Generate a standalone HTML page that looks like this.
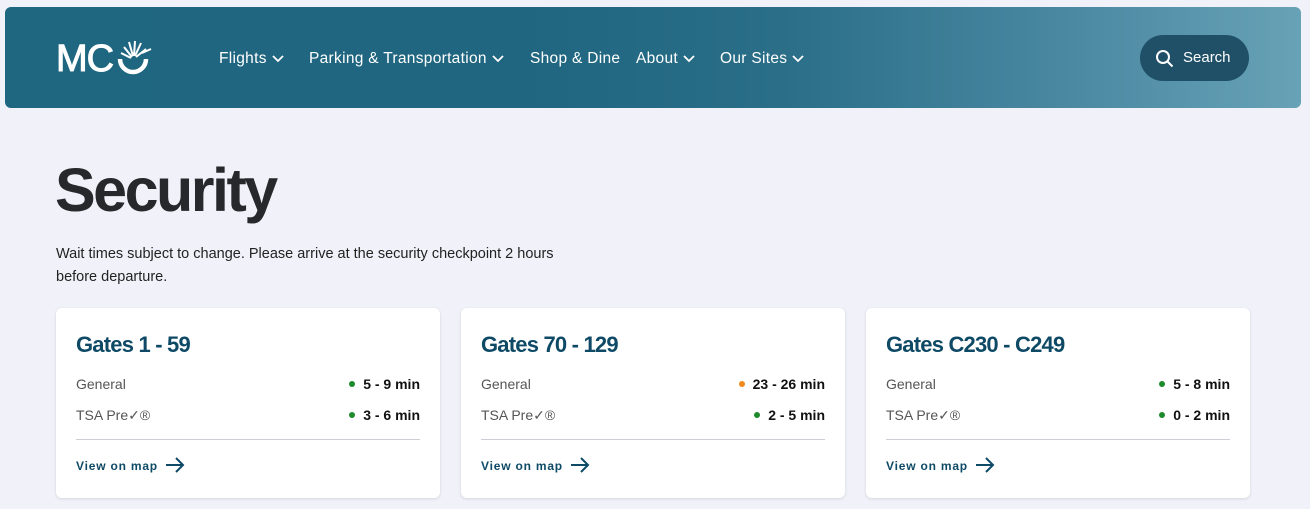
<!DOCTYPE html>
<html><head><style>
body{margin:0;width:1310px;height:509px;background:#f1f2f9;font-family:"Liberation Sans",sans-serif;overflow:hidden;position:relative}
.hdr{position:absolute;left:5px;top:7px;width:1296px;height:101px;border-radius:6px;background:linear-gradient(90deg,#1f6680 0%,#206680 40%,#2a6e88 60%,#4f8ca5 85%,#67a2b6 100%)}
.nav{position:absolute;top:50px;color:#fff;font-size:15.5px;letter-spacing:.3px}
.nav svg{vertical-align:middle;margin-left:5px}
.search{position:absolute;left:1140px;top:35px;width:109px;height:46px;border-radius:23px;background:#1f5068;color:#fff;font-size:15px}
h1{position:absolute;left:55px;top:155px;margin:0;font-size:61px;font-weight:bold;color:#27282c;letter-spacing:-2.5px}
.sub{position:absolute;left:56px;top:243px;font-size:14.5px;line-height:22.5px;color:#222;width:520px}
.card{position:absolute;top:308px;width:384px;height:190px;background:#fff;border-radius:6px;box-shadow:0 1px 3px rgba(0,0,0,.12)}
.card h2{position:absolute;left:20px;top:24px;margin:0;font-size:22px;color:#0e4a66;letter-spacing:-.8px;font-weight:bold}
.row{position:absolute;left:20px;right:20px;font-size:14px;color:#555}
.row b{position:absolute;right:0;color:#111;font-size:14px}
.row b i{display:inline-block;width:6px;height:6px;border-radius:3px;background:#1e8a2c;margin-right:8px;vertical-align:2px}
.hr{position:absolute;left:20px;right:20px;top:131px;border-top:1px solid #ccd0d6}
.vm{position:absolute;left:20px;top:151px;font-size:12px;font-weight:bold;color:#0e4a66;letter-spacing:.8px}
.vm svg{position:absolute;left:89px;top:-2px}
</style></head><body>
<div class="hdr"></div>
<div style="position:absolute;left:56px;top:38px;color:#fff;font-size:38px;font-weight:normal;letter-spacing:-1px;-webkit-text-stroke:1px #fff">MC</div>
<svg style="position:absolute;left:116px;top:39px" width="40" height="36" viewBox="0 0 40 36"><path d="M4 20a13 13 0 0 0 26 0" stroke="#fff" stroke-width="4.5" fill="none"/><g stroke="#fff" stroke-width="2"><line x1="16" y1="18" x2="8" y2="8"/><line x1="17" y1="17" x2="13" y2="3"/><line x1="18" y1="17" x2="19" y2="2"/><line x1="19" y1="17" x2="25" y2="4"/><line x1="20" y1="18" x2="30" y2="10"/><line x1="15" y1="19" x2="5" y2="14"/></g><path d="M26 14l9-4" stroke="#fff" stroke-width="2"/></svg>
<div class="nav" style="left:219px">Flights<svg width="12" height="8"><path d="M1 1l5 5 5-5" stroke="#fff" stroke-width="1.8" fill="none"/></svg></div>
<div class="nav" style="left:309px">Parking &amp; Transportation<svg width="12" height="8"><path d="M1 1l5 5 5-5" stroke="#fff" stroke-width="1.8" fill="none"/></svg></div>
<div class="nav" style="left:530px">Shop &amp; Dine</div>
<div class="nav" style="left:636px">About<svg width="12" height="8"><path d="M1 1l5 5 5-5" stroke="#fff" stroke-width="1.8" fill="none"/></svg></div>
<div class="nav" style="left:720px">Our Sites<svg width="12" height="8"><path d="M1 1l5 5 5-5" stroke="#fff" stroke-width="1.8" fill="none"/></svg></div>
<div class="search"><svg style="position:absolute;left:15px;top:14px" width="19" height="19"><circle cx="8" cy="8" r="6" stroke="#fff" stroke-width="2" fill="none"/><path d="M12.5 12.5l5 5" stroke="#fff" stroke-width="2"/></svg><span style="position:absolute;left:43px;top:14px">Search</span></div>
<h1>Security</h1>
<div class="sub">Wait times subject to change. Please arrive at the security checkpoint 2 hours before departure.</div>

<div class="card" style="left:56px"><h2>Gates 1 - 59</h2>
<div class="row" style="top:68px">General<b><i></i>5 - 9 min</b></div>
<div class="row" style="top:99px">TSA Pre✓®<b><i></i>3 - 6 min</b></div>
<div class="hr"></div><div class="vm">View on map<svg width="20" height="16"><path d="M1 8h17M11 1l7 7-7 7" stroke="#0e4a66" stroke-width="2" fill="none"/></svg></div></div>

<div class="card" style="left:461px"><h2>Gates 70 - 129</h2>
<div class="row" style="top:68px">General<b><i style="background:#f08a1c"></i>23 - 26 min</b></div>
<div class="row" style="top:99px">TSA Pre✓®<b><i></i>2 - 5 min</b></div>
<div class="hr"></div><div class="vm">View on map<svg width="20" height="16"><path d="M1 8h17M11 1l7 7-7 7" stroke="#0e4a66" stroke-width="2" fill="none"/></svg></div></div>

<div class="card" style="left:866px"><h2>Gates C230 - C249</h2>
<div class="row" style="top:68px">General<b><i></i>5 - 8 min</b></div>
<div class="row" style="top:99px">TSA Pre✓®<b><i></i>0 - 2 min</b></div>
<div class="hr"></div><div class="vm">View on map<svg width="20" height="16"><path d="M1 8h17M11 1l7 7-7 7" stroke="#0e4a66" stroke-width="2" fill="none"/></svg></div></div>
</body></html>
